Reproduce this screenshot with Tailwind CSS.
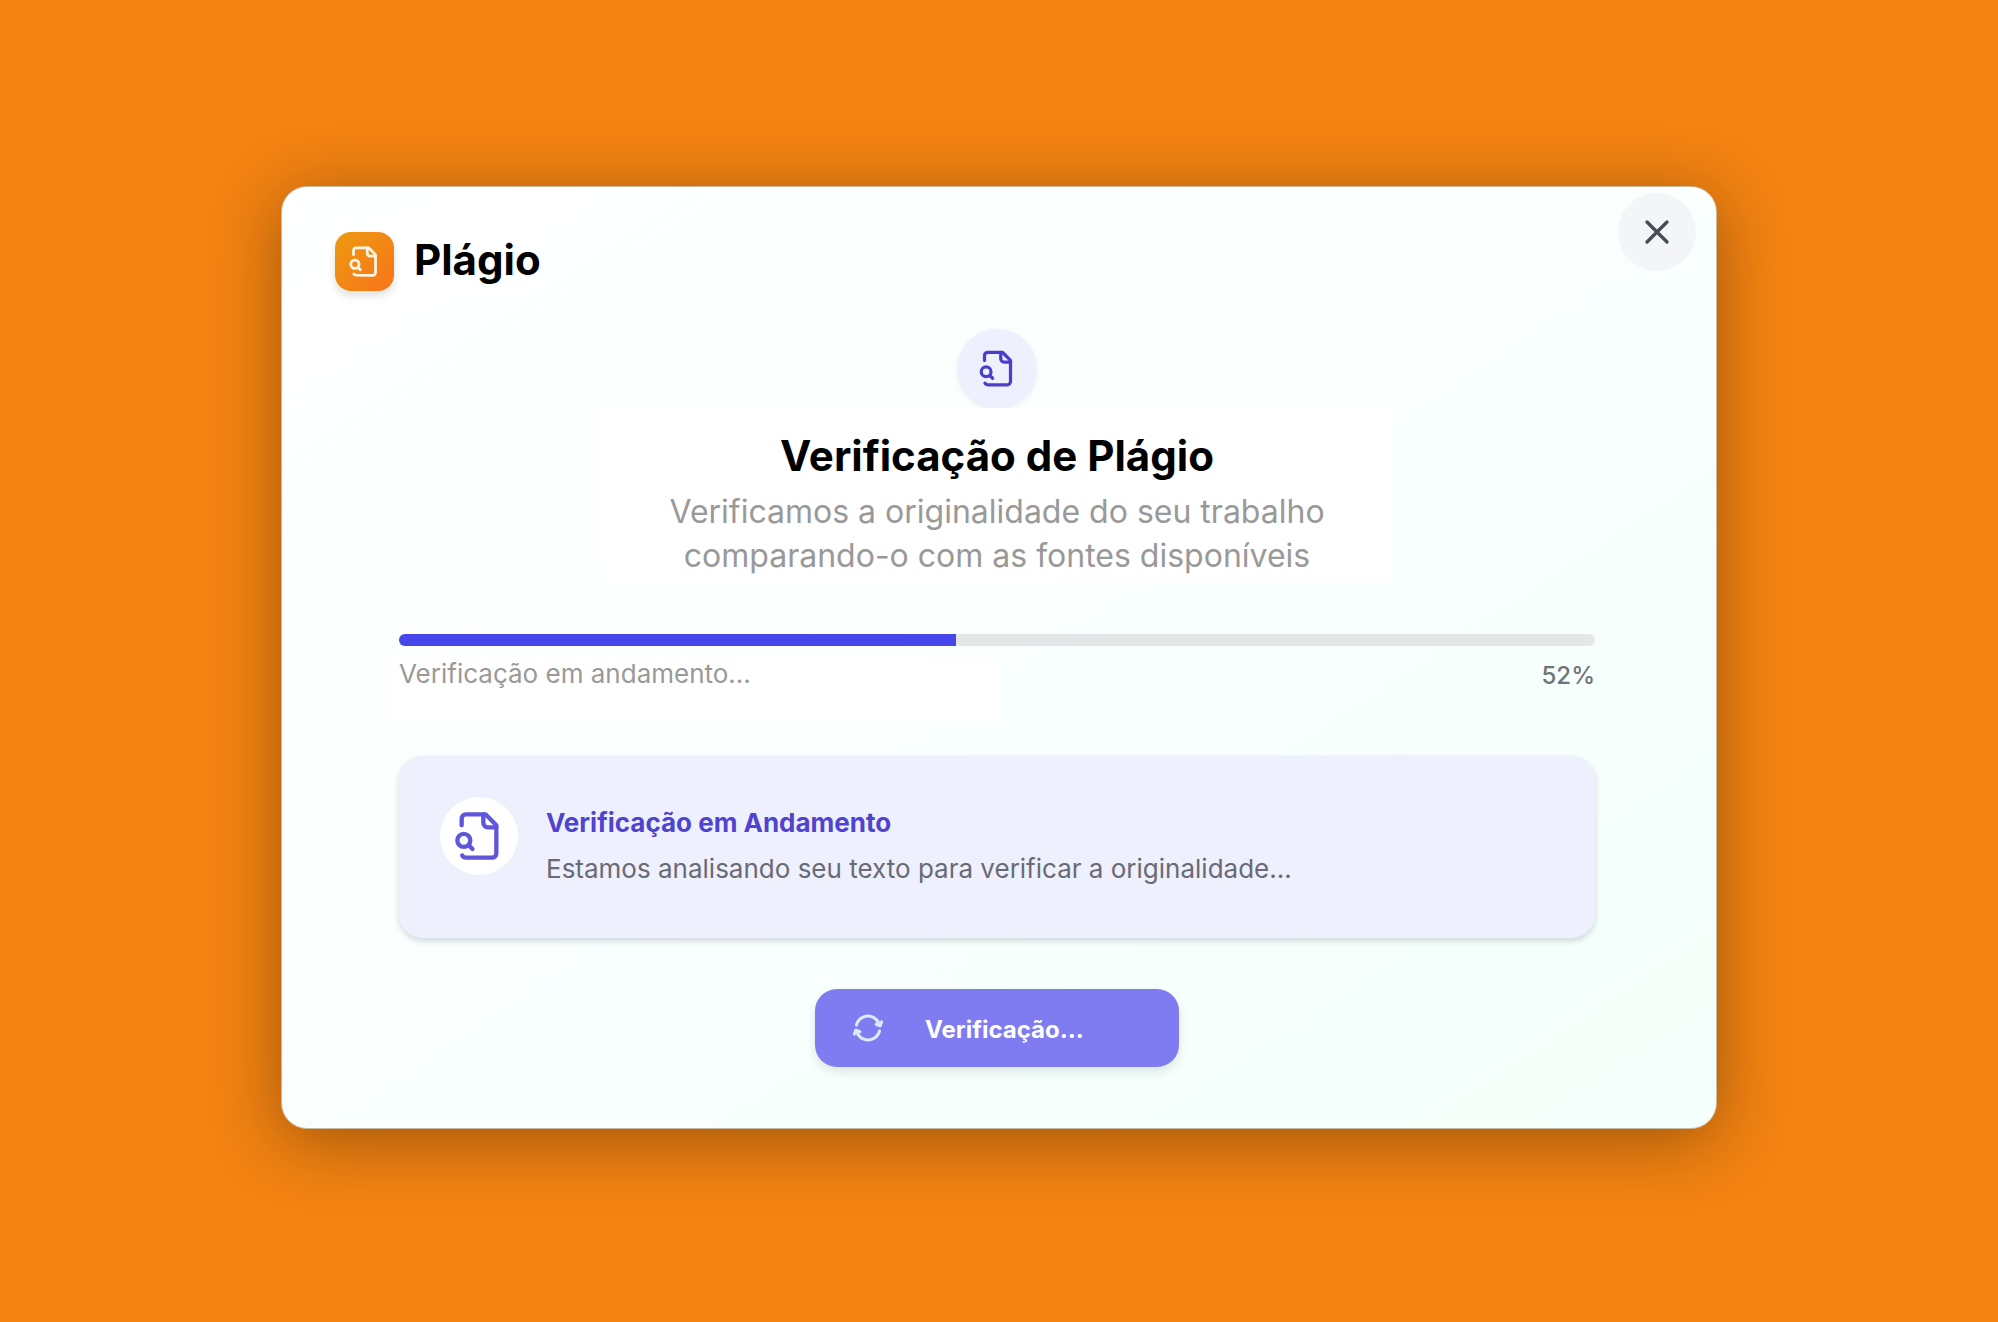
<!DOCTYPE html>
<html lang="pt">
<head>
    <meta charset="UTF-8">
    <meta name="viewport" content="width=device-width, initial-scale=1.0">
    <title>Plágio</title>
    <script src="https://cdn.jsdelivr.net/npm/@tailwindcss/browser@4"></script>
</head>
<body class="bg-[#f38312] font-['Inter',sans-serif] flex items-center justify-center min-h-screen px-6 pt-8 pb-10">

<!-- shared icons -->
<svg class="hidden">
    <symbol id="icon-file-search" viewBox="0 0 24 24" fill="none" stroke="currentColor" stroke-width="2" stroke-linecap="round" stroke-linejoin="round">
        <path d="M14 2v4a2 2 0 0 0 2 2h4"/>
        <path d="M4.268 21a2 2 0 0 0 1.727 1H18a2 2 0 0 0 2-2V7l-5-5H6a2 2 0 0 0-2 2v3"/>
        <path d="m9 18-1.5-1.5"/>
        <circle cx="5" cy="14" r="3"/>
    </symbol>
</svg>

<main role="dialog" aria-labelledby="dialog-title" class="relative w-full max-w-[1436px] rounded-[26px] border border-[#c9b99f] bg-linear-to-br from-white via-[#fafffe] to-[#f3fffa] pt-[45px] pb-[61px] shadow-[0_12px_68px_rgba(40,25,0,0.42)]">
    <button type="button" aria-label="Fechar" class="absolute top-1.5 right-5 size-[78px] rounded-full bg-[#f4f5f8] text-[#454b57] flex items-center justify-center">
        <svg class="size-[40px]" viewBox="0 0 24 24" fill="none" stroke="currentColor" stroke-width="2" stroke-linecap="round"><path d="M18 6 6 18M6 6l12 12"/></svg>
    </button>

    <header class="flex items-start gap-5 px-[53px]">
        <div class="size-[59px] rounded-2xl bg-linear-to-br from-[#ec9a10] to-[#f87319] text-[#fff6e4] flex items-center justify-center shadow-[0_5px_8px_rgba(0,0,0,0.12)]">
            <svg class="size-[33px]"><use href="#icon-file-search"/></svg>
        </div>
        <h1 id="dialog-title" class="text-[42px] leading-[56px] font-bold text-black">Plágio</h1>
    </header>

    <div class="pt-[38px] pr-[121px] pl-[117px]">
        <div class="mx-auto size-20 rounded-full bg-[#eff0fe] text-[#4a3fcb] flex items-center justify-center shadow-[0_2px_6px_rgba(0,0,0,0.06)]">
            <svg class="size-[39px]"><use href="#icon-file-search"/></svg>
        </div>

        <section class="relative mx-auto -mt-px max-w-[788px] bg-white pt-5 pb-1 text-center">
            <h2 class="text-[42px] leading-[56px] font-bold text-black">Verificação de Plágio</h2>
            <p class="mt-1.5 text-[32px] leading-[44px] text-[#999]">Verificamos a originalidade do seu trabalho<br>comparando-o com as fontes disponíveis</p>
        </section>

        <div class="mt-[52px] h-3 overflow-hidden rounded-full bg-[#e4e7e8]" role="progressbar" aria-valuenow="52" aria-valuemin="0" aria-valuemax="100" aria-label="Verificação em andamento">
            <div class="h-full bg-[#4646ea]" style="width: 46.6%"></div>
        </div>
        <div class="mt-3 flex items-start justify-between">
            <p class="-ml-2.5 w-[610px] bg-white pl-2.5 pb-[30px] text-[26px] leading-8 text-[#999]">Verificação em andamento...</p>
            <span class="pt-0.5 text-2xl font-medium text-[#6f7474]">52%</span>
        </div>

        <section class="mt-9 flex items-start gap-7 rounded-3xl bg-[#eff0fd] px-[41px] pt-[41px] pb-[51px] shadow-[0_3px_6px_rgba(20,40,60,0.18)]">
            <div class="mb-[11px] size-[78px] shrink-0 rounded-full bg-white text-[#5f56dc] flex items-center justify-center">
                <svg class="size-[52px]"><use href="#icon-file-search"/></svg>
            </div>
            <div class="pt-2 text-[26px] leading-9">
                <h3 class="font-bold text-[#4f43cf]">Verificação em Andamento</h3>
                <p class="mt-2.5 text-[#696a76]">Estamos analisando seu texto para verificar a originalidade...</p>
            </div>
        </section>

        <button type="button" class="mx-auto mt-[51px] flex h-[78px] w-[364px] items-center gap-10 rounded-[22px] bg-[#7f7bf0] px-9 text-2xl font-bold text-white shadow-[0_5px_10px_rgba(20,60,60,0.12)]">
            <svg class="size-[34px] -rotate-[24deg] text-[#dfe9ff]" viewBox="0 0 512 512" fill="none" stroke="currentColor" stroke-width="46" stroke-linecap="round" stroke-linejoin="round">
                <path d="M434.67 285.59v-29.8c0-98.73-80.24-178.79-179.2-178.79a179 179 0 0 0-140.14 67.36m-38.53 82v29.8C76.8 355 157 435 256 435a180.45 180.45 0 0 0 140-66.92"/>
                <path d="m32 256 44-44 46 44m358 0-44 44-46-44"/>
            </svg>
            <span class="pt-1">Verificação...</span>
        </button>
    </div>
</main>
</body>
</html>
